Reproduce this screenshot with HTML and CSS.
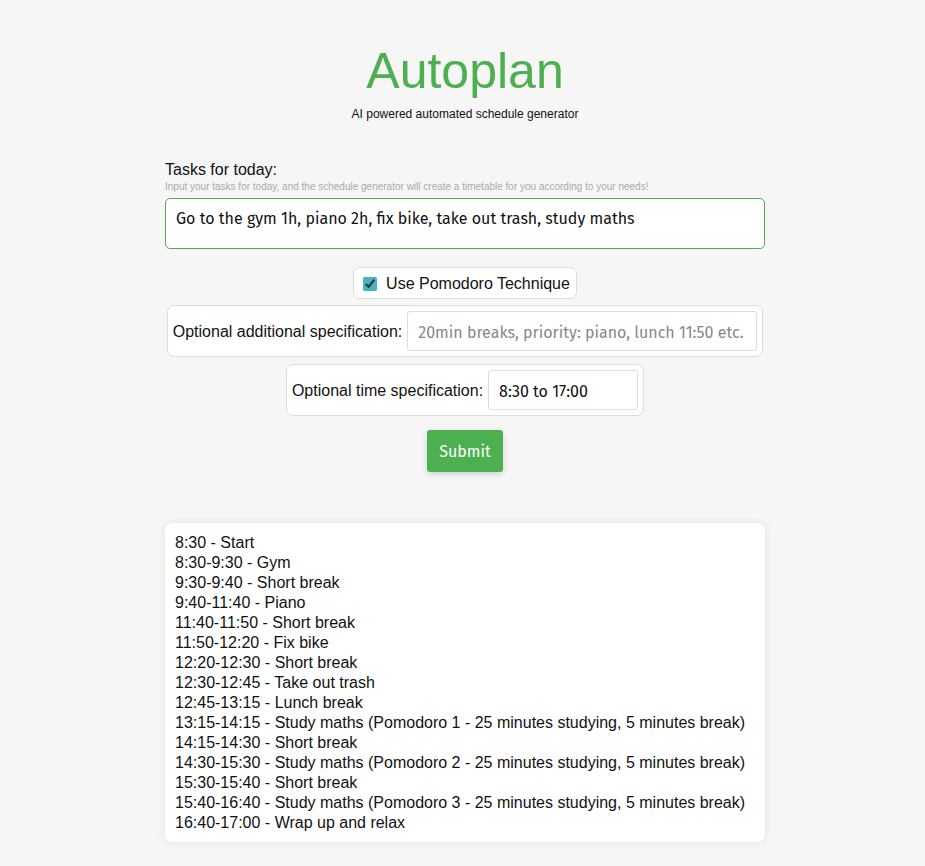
FILE: index.html
```html
<!DOCTYPE html>
<html>
<head>
<meta charset="utf-8">
<title>Autoplan</title>
<link rel="stylesheet" href="styles.css">
</head>
<body>
<div class="page">
  <header class="header">
    <h1 class="title">Autoplan</h1>
    <p class="subtitle">AI powered automated schedule generator</p>
  </header>
  <form class="form">
    <label class="label" for="tasks">Tasks for today:</label>
    <div class="hint">Input your tasks for today, and the schedule generator will create a timetable for you according to your needs!</div>
    <textarea id="tasks" class="tasks">Go to the gym 1h, piano 2h, fix bike, take out trash, study maths</textarea>
    <div class="row row-check">
      <label class="box check-box"><input type="checkbox" class="check" checked> Use Pomodoro Technique</label>
    </div>
    <div class="row row-spec">
      <div class="box field-box">
        <span>Optional additional specification:</span>
        <input type="text" class="input wide" placeholder="20min breaks, priority: piano, lunch 11:50 etc.">
      </div>
    </div>
    <div class="row row-time">
      <div class="box field-box">
        <span>Optional time specification:</span>
        <input type="text" class="input narrow" value="8:30 to 17:00">
      </div>
    </div>
    <div class="row row-submit">
      <button type="button" class="submit">Submit</button>
    </div>
  </form>
  <div class="output">
    <div>8:30 - Start</div>
    <div>8:30-9:30 - Gym</div>
    <div>9:30-9:40 - Short break</div>
    <div>9:40-11:40 - Piano</div>
    <div>11:40-11:50 - Short break</div>
    <div>11:50-12:20 - Fix bike</div>
    <div>12:20-12:30 - Short break</div>
    <div>12:30-12:45 - Take out trash</div>
    <div>12:45-13:15 - Lunch break</div>
    <div>13:15-14:15 - Study maths (Pomodoro 1 - 25 minutes studying, 5 minutes break)</div>
    <div>14:15-14:30 - Short break</div>
    <div>14:30-15:30 - Study maths (Pomodoro 2 - 25 minutes studying, 5 minutes break)</div>
    <div>15:30-15:40 - Short break</div>
    <div>15:40-16:40 - Study maths (Pomodoro 3 - 25 minutes studying, 5 minutes break)</div>
    <div>16:40-17:00 - Wrap up and relax</div>
  </div>
</div>
</body>
</html>
```
FILE: styles.css
```css
* { box-sizing: border-box; }
html, body { margin: 0; padding: 0; }
body {
  background: #f6f6f6;
  font-family: "Liberation Sans", Arial, sans-serif;
  color: #111;
  padding-left: 5px;
}
.page {
  width: 600px;
  margin: 0 auto;
  padding-top: 41px;
  padding-bottom: 23px;
}
.header { text-align: center; }
.title {
  margin: 0;
  font-size: 50px;
  font-weight: normal;
  color: #4caf50;
  line-height: 60px;
}
.subtitle {
  margin: 4px 0 0;
  font-size: 12px;
  line-height: 18px;
  color: #111;
}
.form {
  margin-top: 38px;
  display: flex;
  flex-direction: column;
}
.label {
  font-size: 16px;
  line-height: 18px;
  margin-bottom: 2px;
}
.hint {
  font-size: 10px;
  line-height: 12px;
  color: #aaa;
  margin-bottom: 5px;
}
.tasks {
  width: 600px;
  height: 51px;
  border: 1px solid #4caf50;
  border-radius: 5px;
  padding: 10px 10px 8px;
  font-family: "Fira Sans", "Open Sans", sans-serif;
  font-size: 16px;
  color: #111;
  resize: none;
  background: #fff;
  outline: none;
  display: block;
}
.row {
  display: flex;
  justify-content: center;
}
.row-check { margin-top: 18px; }
.row-spec { margin-top: 6px; }
.row-time { margin-top: 7px; }
.row-submit { margin-top: 14px; }
.box {
  background: #fff;
  border: 1px solid #ddd;
  border-radius: 7px;
  display: flex;
  align-items: center;
  font-size: 16px;
}
.check-box {
  height: 32px;
  padding: 1px 6px 0 9px;
  gap: 9px;
}
.check {
  margin: 0;
  width: 14px;
  height: 14px;
  accent-color: #45b5c4;
}
.field-box {
  padding: 5px;
  gap: 5px;
}
.field-box span { padding-top: 2px; }
.input {
  height: 40px;
  border: 1px solid #ddd;
  border-radius: 3px;
  padding: 2px 10px 0;
  font-family: "Fira Sans", "Open Sans", sans-serif;
  font-size: 16px;
  color: #111;
  background: #fff;
  outline: none;
}
.input::placeholder { color: #888; }
.wide { width: 350px; }
.narrow { width: 150px; }
.submit {
  width: 76px;
  height: 42px;
  background: #4caf50;
  color: #fff;
  border: none;
  border-radius: 3px;
  font-family: "Fira Sans", "Open Sans", sans-serif;
  font-size: 16px;
  box-shadow: 0 2px 6px rgba(0,0,0,0.15);
  padding: 0;
}
.output {
  margin-top: 51px;
  background: #fff;
  border-radius: 8px;
  box-shadow: 0 0 10px rgba(0,0,0,0.08);
  padding: 10px 10px 9px;
  font-size: 16px;
  line-height: 20px;
}
```
